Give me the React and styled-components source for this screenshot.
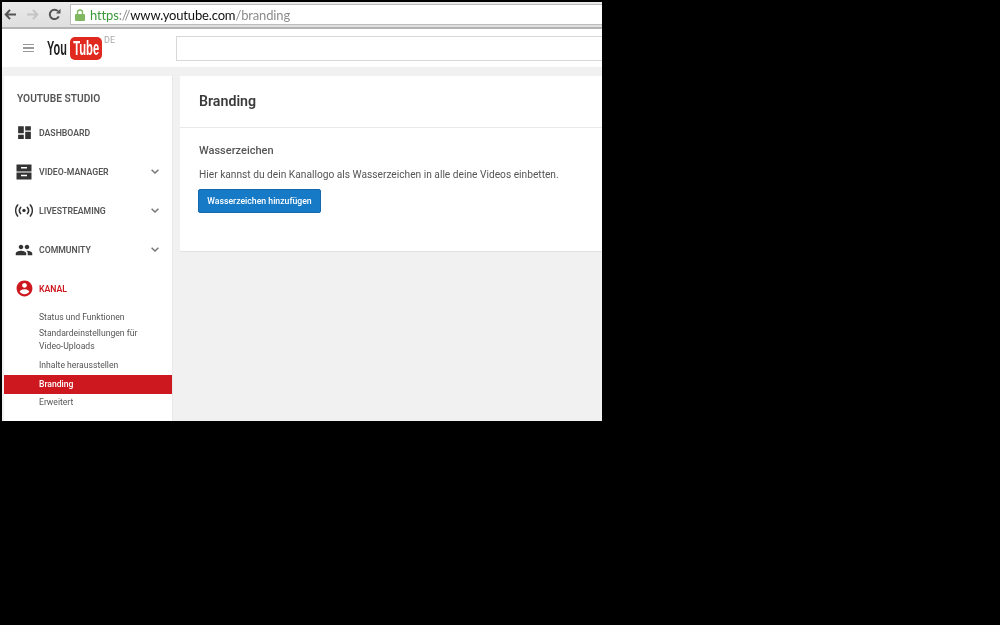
import React from 'react';
import styled, { createGlobalStyle } from 'styled-components';

const Global = createGlobalStyle`
  html, body { margin: 0; height: 100%; background: #000; }
  body { font-family: Roboto, "Liberation Sans", sans-serif; overflow: hidden; }
`;

const Glyph = ({ d, size = 24, color = '#333' }) => (
  <svg width={size} height={size} viewBox="0 0 24 24" fill={color}><path d={d} /></svg>
);

const navItems = [
  { label: 'Dashboard', size: 17, d: 'M3 13h8V3H3v10zm0 8h8v-6H3v6zm10 0h8V11h-8v10zm0-18v6h8V3h-8z' },
  { label: 'Video-Manager', size: 18, arrow: true, d: 'M2 2h20v9.4H2V2zm6 3.4v1.8h8V5.4H8zM2 12.6h20V22H2v-9.4zm6 3.2v1.8h8v-1.8H8z' },
  { label: 'Livestreaming', arrow: true, live: true },
  { label: 'Community', size: 18, arrow: true, d: 'M16 11c1.66 0 2.99-1.34 2.99-3S17.66 5 16 5c-1.66 0-3 1.34-3 3s1.34 3 3 3zm-8 0c1.66 0 2.99-1.34 2.99-3S9.66 5 8 5C6.34 5 5 6.34 5 8s1.34 3 3 3zm0 2c-2.33 0-7 1.17-7 3.5V19h14v-2.5c0-2.33-4.67-3.5-7-3.5zm8 0c-.29 0-.62.02-.97.05 1.16.84 1.97 1.97 1.97 3.45V19h6v-2.5c0-2.33-4.67-3.5-7-3.5z' },
];

const subItems = [
  { label: 'Status und Funktionen', height: 19, top: 3 },
  { label: 'Standardeinstellungen für Video-Uploads', height: 29, top: 0 },
  { label: 'Inhalte herausstellen', height: 19, top: 3 },
  { label: 'Branding', height: 19, top: 3, active: true },
  { label: 'Erweitert', height: 19, top: 2 },
];

const LiveIcon = () => (
  <svg width="18" height="13" viewBox="0 0 18 13" fill="none" stroke="#333" strokeWidth="1.6" strokeLinecap="round">
    <circle cx="9" cy="6.5" r="1.7" fill="#333" stroke="none" />
    <path d="M5.6 3.4a5 5 0 0 0 0 6.2M12.4 3.4a5 5 0 0 1 0 6.2" />
    <path d="M2.6 1a9 9 0 0 0 0 11M15.4 1a9 9 0 0 1 0 11" />
  </svg>
);

const Chevron = () => (
  <svg width="8" height="5" viewBox="0 0 8 5" fill="none" stroke="#777" strokeWidth="1.5"><path d="M.6.7L4 4l3.4-3.3" /></svg>
);

const App = () => (
  <>
    <Global />
    <Frame>
      <Toolbar>
        <NavButton aria-label="back">
          <svg width="13" height="11" viewBox="0 0 14 12" fill="none" stroke="#555" strokeWidth="2.2"><path d="M13 6H2M6.5 1L1.8 6l4.7 5" /></svg>
        </NavButton>
        <NavButton aria-label="forward">
          <svg width="13" height="11" viewBox="0 0 14 12" fill="none" stroke="#c4c4c4" strokeWidth="2.2"><path d="M1 6h11M7.5 1l4.700 5-4.700 5" /></svg>
        </NavButton>
        <NavButton aria-label="reload">
          <svg width="13" height="13" viewBox="0 0 13 13" fill="none" stroke="#555" strokeWidth="2"><path d="M10.8 8.3A4.7 4.7 0 1 1 10 3.2" /><path d="M12.5.8v4.6H8z" fill="#555" stroke="none" /></svg>
        </NavButton>
        <UrlBar>
          <svg width="10" height="12" viewBox="0 0 10 12"><path d="M1 5h8a1 1 0 0 1 1 1v5a1 1 0 0 1-1 1H1a1 1 0 0 1-1-1V6a1 1 0 0 1 1-1z" fill="#7fb860" /><path d="M2.5 5.5V3.500a2.500 2.500 0 0 1 5 0v2" fill="none" stroke="#7fb860" strokeWidth="1.3" /></svg>
          <Url>
            <Secure>https</Secure><Faint>://</Faint>www.youtube.com<Faint>/branding</Faint>
          </Url>
        </UrlBar>
      </Toolbar>
      <Masthead>
        <Burger><i /><i /><i /></Burger>
        <Logo>
          <LogoYou>You</LogoYou>
          <LogoTube><span>Tube</span></LogoTube>
          <LogoRegion>DE</LogoRegion>
        </Logo>
        <Search />
      </Masthead>
      <Content>
        <Sidebar>
          <SideTitle>YouTube Studio</SideTitle>
          {navItems.map((item) => (
            <NavRow key={item.label}>
              <IconSlot>{item.live ? <LiveIcon /> : <Glyph d={item.d} size={item.size} />}</IconSlot>
              <NavLabel>{item.label}</NavLabel>
              {item.arrow && <Chevron />}
            </NavRow>
          ))}
          <NavRow>
            <IconSlot>
              <Glyph size={19} color="#cc181e" d="M12 2C6.48 2 2 6.48 2 12s4.48 10 10 10 10-4.48 10-10S17.52 2 12 2zm0 3c1.66 0 3 1.34 3 3s-1.34 3-3 3-3-1.34-3-3 1.34-3 3-3zm0 14.2c-2.5 0-4.71-1.28-6-3.22.03-1.99 4-3.08 6-3.08 1.99 0 5.97 1.09 6 3.08-1.29 1.94-3.5 3.22-6 3.22z" />
            </IconSlot>
            <NavLabel $red>Kanal</NavLabel>
          </NavRow>
          <div>
            {subItems.map((item) => (
              <SubItem key={item.label} $active={item.active} $height={item.height} $top={item.top}>{item.label}</SubItem>
            ))}
          </div>
        </Sidebar>
        <Card>
          <CardHead>Branding</CardHead>
          <CardBody>
            <SectionTitle>Wasserzeichen</SectionTitle>
            <Hint>Hier kannst du dein Kanallogo als Wasserzeichen in alle deine Videos einbetten.</Hint>
            <PrimaryButton>Wasserzeichen hinzufügen</PrimaryButton>
          </CardBody>
        </Card>
      </Content>
    </Frame>
  </>
);

const Frame = styled.div`
  width: 600px;
  height: 419px;
  margin: 2px 0 0 2px;
  background: #f1f1f1;
  overflow: hidden;
  display: flex;
  flex-direction: column;
  filter: blur(0.35px);
`;

const Toolbar = styled.div`
  height: 25px;
  flex: none;
  display: flex;
  align-items: center;
  background: linear-gradient(#e9e9e9, #dfdfdf);
  border-bottom: 2px solid #b4b4b4;
`;

const NavButton = styled.div`
  width: 22px;
  display: flex;
  align-items: center;
  justify-content: center;

  &:first-child {
    margin-left: -3px;
  }
`;

const UrlBar = styled.div`
  margin-left: 5px;
  flex: 1;
  height: 21px;
  box-sizing: border-box;
  padding-left: 4px;
  display: flex;
  align-items: center;
  gap: 5px;
  background: #fff;
  border: 1px solid #bcbcbc;
  border-right: none;
`;

const Url = styled.span`
  font-family: Lato, "Liberation Sans", sans-serif;
  font-size: 13px;
  letter-spacing: -0.15px;
  color: #111;
  white-space: nowrap;
`;

const Secure = styled.span`
  color: #3a9a3a;
`;

const Faint = styled.span`
  color: #8c8c8c;
`;

const Masthead = styled.header`
  height: 38px;
  flex: none;
  display: flex;
  align-items: center;
  padding-left: 21px;
  background: #fff;
`;

const Burger = styled.div`
  width: 11px;
  display: flex;
  flex-direction: column;
  gap: 2px;

  i {
    height: 1.5px;
    background: #9a9a9a;
  }
`;

const Logo = styled.div`
  display: flex;
  align-items: center;
  margin-left: 13px;
  width: 129px;
`;

const LogoYou = styled.span`
  display: inline-block;
  width: 23px;
  font-family: "Liberation Sans", sans-serif;
  font-size: 21px;
  font-weight: 700;
  color: #222;
  white-space: nowrap;
  transform: scaleX(0.52);
  transform-origin: left center;
`;

const LogoTube = styled.span`
  width: 32px;
  height: 23px;
  flex: none;
  border-radius: 5px;
  background: #e02a20;
  color: #fff;
  display: flex;
  align-items: center;
  justify-content: center;

  span {
    font-family: "Liberation Sans", sans-serif;
    font-size: 20px;
    font-weight: 700;
    transform: scaleX(0.56);
  }
`;

const LogoRegion = styled.span`
  align-self: flex-start;
  margin: -1px 0 0 2px;
  font-size: 9px;
  line-height: 11px;
  color: #aaa;
`;

const Search = styled.div`
  flex: 1;
  height: 23px;
  margin-right: -10px;
  background: #fff;
  border: 1px solid #d8d8d8;
`;

const Content = styled.div`
  flex: 1;
  min-height: 0;
  display: flex;
  align-items: flex-start;
  gap: 8px;
  padding: 9px 0 0 2px;
`;

const Sidebar = styled.nav`
  width: 168px;
  height: 350px;
  flex: none;
  background: #fff;
  border-right: 1px solid #e8e8e8;
  margin-right: -1px;
`;

const SideTitle = styled.h2`
  margin: 0;
  height: 37px;
  box-sizing: border-box;
  padding: 16px 0 0 13px;
  font-size: 10.2px;
  line-height: 13px;
  font-weight: 600;
  color: #555;
  text-transform: uppercase;
`;

const NavRow = styled.div`
  height: 39px;
  display: flex;
  align-items: center;
  padding: 0 13px 0 9px;
`;

const IconSlot = styled.div`
  width: 22px;
  margin-right: 4px;
  display: flex;
  justify-content: center;
`;

const NavLabel = styled.span`
  flex: 1;
  font-size: 8.7px;
  font-weight: 600;
  text-transform: uppercase;
  color: ${(p) => (p.$red ? '#cc181e' : '#555')};
`;

const SubItem = styled.div`
  height: ${(p) => p.$height}px;
  box-sizing: border-box;
  padding: ${(p) => p.$top}px 24px 0 35px;
  font-size: 8.6px;
  line-height: 13px;
  font-weight: ${(p) => (p.$active ? 500 : 400)};
  color: ${(p) => (p.$active ? '#fff' : '#555')};
  background: ${(p) => (p.$active ? '#cc181e' : 'transparent')};
`;

const Card = styled.main`
  flex: 1;
  background: #fff;
  border-bottom: 1px solid #e2e2e2;
  height: 175px;
`;

const CardHead = styled.h1`
  margin: 0;
  height: 52px;
  box-sizing: border-box;
  padding: 17px 0 0 19px;
  font-size: 14.2px;
  line-height: 17px;
  font-weight: 600;
  color: #3a3a3a;
  border-bottom: 1px solid #e8e8e8;
`;

const CardBody = styled.div`
  padding: 16px 0 0 19px;
`;

const SectionTitle = styled.h3`
  margin: 0 0 11px;
  font-size: 11px;
  line-height: 13px;
  font-weight: 500;
  color: #555;
`;

const Hint = styled.p`
  margin: 0 0 8px;
  font-size: 10.2px;
  line-height: 13px;
  color: #555;
`;

const PrimaryButton = styled.button`
  display: block;
  width: 123px;
  height: 24px;
  margin-left: -1px;
  padding: 0;
  border: 1px solid #1668ad;
  border-radius: 2px;
  background: #167ac6;
  color: #fff;
  font-family: inherit;
  font-size: 8.7px;
  font-weight: 500;
`;

export default App;
